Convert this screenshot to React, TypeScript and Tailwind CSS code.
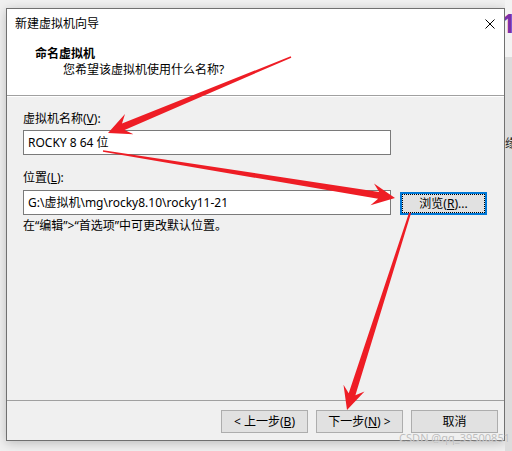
import React from "react";

function arrow(tx: number, ty: number, px: number, py: number, w0: number, w1: number, L: number, H: number) {
  const dx = px - tx;
  const dy = py - ty;
  const len = Math.hypot(dx, dy);
  const ux = dx / len;
  const uy = dy / len;
  const nx = -uy;
  const ny = ux;
  const neckX = px - L * 0.72 * ux;
  const neckY = py - L * 0.72 * uy;
  const baseX = px - L * ux;
  const baseY = py - L * uy;
  const pts: [number, number][] = [
    [tx + (nx * w0) / 2, ty + (ny * w0) / 2],
    [neckX + (nx * w1) / 2, neckY + (ny * w1) / 2],
    [baseX + nx * H, baseY + ny * H],
    [px, py],
    [baseX - nx * H, baseY - ny * H],
    [neckX - (nx * w1) / 2, neckY - (ny * w1) / 2],
    [tx - (nx * w0) / 2, ty - (ny * w0) / 2],
  ];
  return pts.map((p) => `${p[0].toFixed(1)},${p[1].toFixed(1)}`).join(" ");
}

function Btn({ children, focused }: { children: React.ReactNode; focused?: boolean }) {
  return (
    <div
      className={
        focused
          ? "flex h-[23px] w-[87px] shrink-0 items-center justify-center border-2 border-[#0078d7] bg-[#e1e1e1] leading-[16px] outline-1 outline-dotted outline-black outline-offset-[-3px]"
          : "flex h-[23px] w-[87px] shrink-0 items-center justify-center border border-[#adadad] bg-[#e1e1e1] leading-[16px]"
      }
    >
      {children}
    </div>
  );
}

export default function App() {
  return (
    <div className="relative flex h-[451px] w-[512px] overflow-hidden bg-[#f0f0f0] text-[12px] text-black [font-family:'Noto_Sans','Noto_Sans_CJK_SC',sans-serif]">
      <div className="w-[6px] shrink-0" />
      <div className="mt-[8px] flex h-[433px] w-[499px] shrink-0 flex-col border border-[#707070] bg-[#f0f0f0] shadow-[0_2px_10px_rgba(0,0,0,0.22)]">
        <div className="h-[87px] shrink-0 border-b border-[#a0a0a0] bg-white">
          <div className="flex h-[29px] items-center justify-between pl-[8px] pr-[9px]">
            <span className="leading-[16px]">新建虚拟机向导</span>
            <svg width="10" height="10" viewBox="0 0 10 10">
              <path d="M0.5 0.5 L9.5 9.5 M9.5 0.5 L0.5 9.5" stroke="#000" strokeWidth="1" fill="none" />
            </svg>
          </div>
          <div className="mt-[8px] pl-[28px] font-bold leading-[16px]">命名虚拟机</div>
          <div className="pl-[56px] leading-[16px]">您希望该虚拟机使用什么名称?</div>
        </div>
        <div className="h-[304px] shrink-0 border-t border-white pl-[16px] pt-[14px]">
          <div className="leading-[16px]">
            虚拟机名称(<span className="underline">V</span>):
          </div>
          <div className="mt-[3px] flex h-[25px] w-[368px] items-center border border-[#7a7a7a] bg-white pl-[4px] leading-[16px]">
            ROCKY 8 64 位
          </div>
          <div className="mt-[15px] leading-[16px]">
            位置(<span className="underline">L</span>):
          </div>
          <div className="mt-[4px] flex items-start">
            <div className="flex h-[25px] w-[368px] items-center border border-[#7a7a7a] bg-white pl-[4px] leading-[16px]">
              G:\虚拟机\mg\rocky8.10\rocky11-21
            </div>
            <div className="ml-[9px] mt-[2px]">
              <Btn focused>
                浏览(<span className="underline">R</span>)...
              </Btn>
            </div>
          </div>
          <div className="mt-[3px] leading-[16px]">在“编辑”&gt;“首选项”中可更改默认位置。</div>
        </div>
        <div className="flex h-[40px] shrink-0 justify-end gap-[8px] border-t border-[#a0a0a0] pr-[6px] pt-[9px]">
          <Btn>
            &lt; 上一步(<span className="underline">B</span>)
          </Btn>
          <Btn>
            下一步(<span className="underline">N</span>) &gt;
          </Btn>
          <Btn>取消</Btn>
        </div>
      </div>
      <div className="flex flex-1 flex-col overflow-hidden">
        <div className="h-[57px] shrink-0 bg-[#f3f3f3] pt-[10px]">
          <span className="ml-[-4px] block text-[26px] font-bold leading-[26px] text-[#7b2fa8]">1</span>
        </div>
        <div className="flex-1 bg-[#dcdcdc] pt-[79px] leading-[16px] text-[#222]">缘</div>
      </div>

      <div className="absolute right-[2px] top-[431px] text-[11px] leading-[14px] text-[#bdbdbd] [text-shadow:0_0_1px_rgba(255,255,255,0.6)]">
        CSDN @qq_39500851
      </div>

      <svg className="pointer-events-none absolute left-0 top-0" width="512" height="451" viewBox="0 0 512 451">
        <polygon points={arrow(291, 57, 108, 133, 1.5, 7, 23, 11)} fill="#ee1d25" />
        <polygon points={arrow(103, 151, 395, 198, 1.5, 7, 23, 11)} fill="#ee1d25" />
        <polygon points={arrow(410, 213, 347, 410, 2, 7, 23, 11)} fill="#ee1d25" />
      </svg>
    </div>
  );
}
